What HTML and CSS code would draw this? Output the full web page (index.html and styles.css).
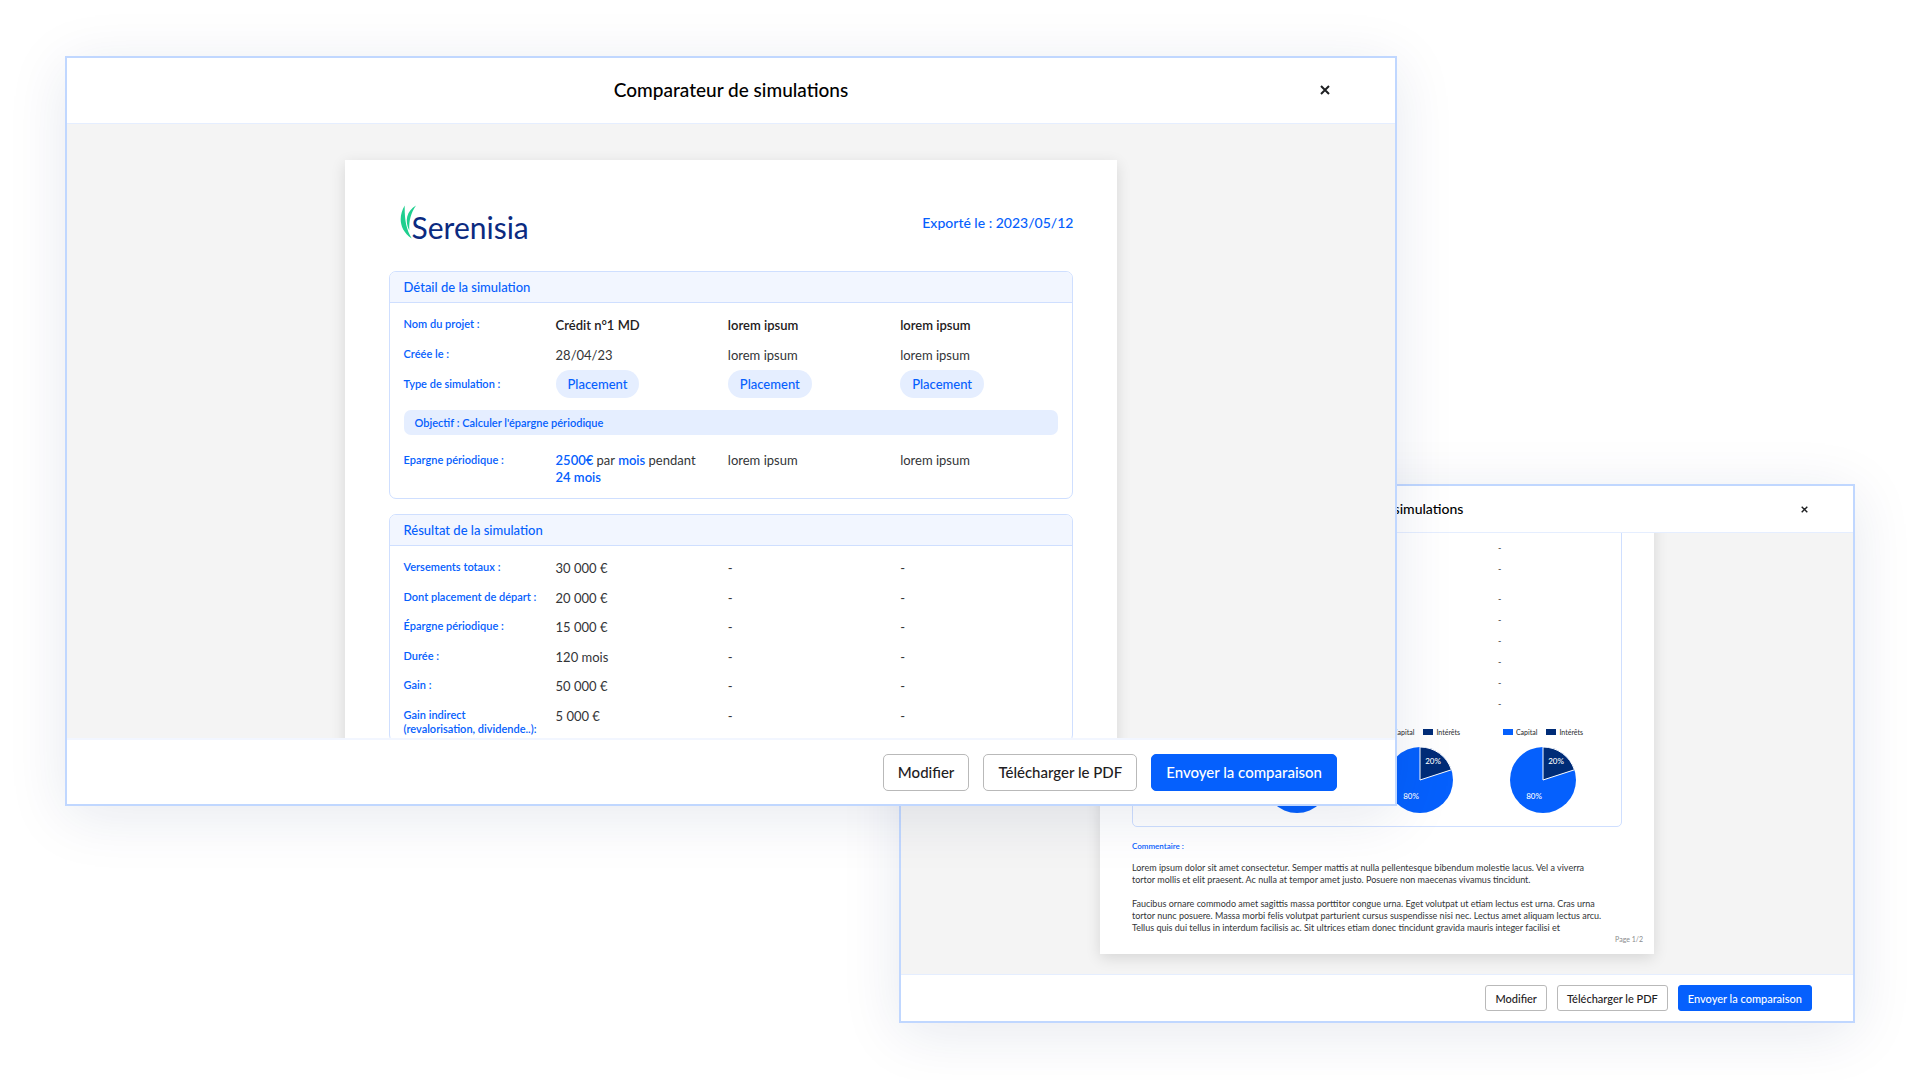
FILE: index.html
```html
<!DOCTYPE html>
<html lang="fr">
<head>
<meta charset="utf-8">
<meta name="viewport" content="width=device-width, initial-scale=1">
<title>Comparateur de simulations</title>
<link rel="stylesheet" href="styles.css">
</head>
<body>
<main class="stage">

  <section class="modal modal-back" aria-label="Comparateur de simulations, fin du document">
    <header class="modal-header">
      <h2 class="modal-title">Comparateur de simulations</h2>
      <button class="close" type="button" aria-label="Fermer">
        <svg class="close-icon" viewBox="0 0 10 10"><path d="M1 1l8 8M9 1l-8 8"/></svg>
      </button>
    </header>
    <div class="modal-body">
      <article class="page">
        <div class="page-content">
          <section class="card">
            <table class="data">
              <colgroup><col class="col-label"><col><col><col></colgroup>
              <tbody>
                <tr><th scope="row">Épargne périodique :</th><td>15 000 €</td><td>-</td><td>-</td></tr>
                <tr><th scope="row">Durée :</th><td>120 mois</td><td>-</td><td>-</td></tr>
                <tr><th scope="row">Gain :</th><td>50 000 €</td><td>-</td><td>-</td></tr>
                <tr><th scope="row">Gain indirect<br>(revalorisation, dividende..):</th><td>5 000 €</td><td>-</td><td>-</td></tr>
                <tr><th></th><td>-</td><td>-</td><td>-</td></tr>
                <tr><th></th><td>-</td><td>-</td><td>-</td></tr>
                <tr><th></th><td>-</td><td>-</td><td>-</td></tr>
                <tr><th></th><td>-</td><td>-</td><td>-</td></tr>
                <tr><th></th><td>-</td><td>-</td><td>-</td></tr>
                <tr><th></th><td>-</td><td>-</td><td>-</td></tr>
                <tr class="charts">
                  <th></th>
                  <td>
                    <figure class="chart">
                      <figcaption class="legend"><span class="key">Capital</span><span class="key key-dark">Intérêts</span></figcaption>
                      <svg class="pie" viewBox="-33 -33 66 66"><circle r="33"/><path d="M0 0V-33A33 33 0 0 1 31.4 -10.2Z"/><text x="13" y="-16">20%</text><text x="-9" y="19">80%</text></svg>
                    </figure>
                  </td>
                  <td>
                    <figure class="chart">
                      <figcaption class="legend"><span class="key">Capital</span><span class="key key-dark">Intérêts</span></figcaption>
                      <svg class="pie" viewBox="-33 -33 66 66"><circle r="33"/><path d="M0 0V-33A33 33 0 0 1 31.4 -10.2Z"/><text x="13" y="-16">20%</text><text x="-9" y="19">80%</text></svg>
                    </figure>
                  </td>
                  <td>
                    <figure class="chart">
                      <figcaption class="legend"><span class="key">Capital</span><span class="key key-dark">Intérêts</span></figcaption>
                      <svg class="pie" viewBox="-33 -33 66 66"><circle r="33"/><path d="M0 0V-33A33 33 0 0 1 31.4 -10.2Z"/><text x="13" y="-16">20%</text><text x="-9" y="19">80%</text></svg>
                    </figure>
                  </td>
                </tr>
              </tbody>
            </table>
          </section>
          <section class="comment">
            <h3 class="comment-title">Commentaire :</h3>
            <p>Lorem ipsum dolor sit amet consectetur. Semper mattis at nulla pellentesque bibendum molestie lacus. Vel a viverra<br>tortor mollis et elit praesent. Ac nulla at tempor amet justo. Posuere non maecenas vivamus tincidunt.</p>
            <p>Faucibus ornare commodo amet sagittis massa porttitor congue urna. Eget volutpat ut etiam lectus est urna. Cras urna<br>tortor nunc posuere. Massa morbi felis volutpat parturient cursus suspendisse nisi nec. Lectus amet aliquam lectus arcu.<br>Tellus quis dui tellus in interdum facilisis ac. Sit ultrices etiam donec tincidunt gravida mauris integer facilisi et</p>
          </section>
        </div>
        <footer class="page-number">Page 1/2</footer>
      </article>
    </div>
    <footer class="modal-footer">
      <button class="btn" type="button">Modifier</button>
      <button class="btn" type="button">Télécharger le PDF</button>
      <button class="btn btn-primary" type="button">Envoyer la comparaison</button>
    </footer>
  </section>

  <section class="modal modal-front" aria-label="Comparateur de simulations">
    <header class="modal-header">
      <h1 class="modal-title">Comparateur de simulations</h1>
      <button class="close" type="button" aria-label="Fermer">
        <svg class="close-icon" viewBox="0 0 10 10"><path d="M1 1l8 8M9 1l-8 8"/></svg>
      </button>
    </header>
    <div class="modal-body">
      <article class="page">
        <header class="page-header">
          <div class="brand">
            <svg class="brand-leaf" viewBox="0 0 16 34"><path d="M4.700 .5C-1.500 11 -1.500 24 11.700 33.500C6 24 4.500 14 4.700 .5Z"/><path d="M16 .5C6.500 6 4.500 16 9.300 25.500C8.800 15 11 8 16 .5Z"/></svg>
            <span class="brand-name">Serenisia</span>
          </div>
          <p class="export-date">Exporté le : 2023/05/12</p>
        </header>

        <section class="card">
          <h2 class="card-title">Détail de la simulation</h2>
          <table class="data">
            <colgroup><col class="col-label"><col><col><col></colgroup>
            <tbody>
              <tr class="strong"><th scope="row">Nom du projet :</th><td>Crédit n°1 MD</td><td>lorem ipsum</td><td>lorem ipsum</td></tr>
              <tr><th scope="row">Créée le :</th><td>28/04/23</td><td>lorem ipsum</td><td>lorem ipsum</td></tr>
              <tr class="types"><th scope="row">Type de simulation :</th><td><span class="pill">Placement</span></td><td><span class="pill">Placement</span></td><td><span class="pill">Placement</span></td></tr>
              <tr class="goal-row"><td colspan="4"><div class="goal">Objectif : Calculer l'épargne périodique</div></td></tr>
              <tr class="saving"><th scope="row">Epargne périodique :</th><td><b>2500€</b> par <b>mois</b> pendant <b>24 mois</b></td><td>lorem ipsum</td><td>lorem ipsum</td></tr>
            </tbody>
          </table>
        </section>

        <section class="card">
          <h2 class="card-title">Résultat de la simulation</h2>
          <table class="data results">
            <colgroup><col class="col-label"><col><col><col></colgroup>
            <tbody>
              <tr><th scope="row">Versements totaux :</th><td>30 000 €</td><td>-</td><td>-</td></tr>
              <tr><th scope="row">Dont placement de départ :</th><td>20 000 €</td><td>-</td><td>-</td></tr>
              <tr><th scope="row">Épargne périodique :</th><td>15 000 €</td><td>-</td><td>-</td></tr>
              <tr><th scope="row">Durée :</th><td>120 mois</td><td>-</td><td>-</td></tr>
              <tr><th scope="row">Gain :</th><td>50 000 €</td><td>-</td><td>-</td></tr>
              <tr><th scope="row">Gain indirect<br>(revalorisation, dividende..):</th><td>5 000 €</td><td>-</td><td>-</td></tr>
            </tbody>
          </table>
        </section>
      </article>
    </div>
    <footer class="modal-footer">
      <button class="btn" type="button">Modifier</button>
      <button class="btn" type="button">Télécharger le PDF</button>
      <button class="btn btn-primary" type="button">Envoyer la comparaison</button>
    </footer>
  </section>

</main>
</body>
</html>
```
FILE: styles.css
```css
:root {
  --blue: #0560fd;
  --navy: #002c77;
  --frame: #c0d7ff;
  --line: #cfdfff;
  --soft: #e5eeff;
  --tint: #f2f6ff;
  --ink: #1e2022;
  --text: #333537;
}

*,
*::before,
*::after {
  box-sizing: border-box;
}

body {
  margin: 0;
  background: #fff;
  color: var(--ink);
  font-family: Lato, "Liberation Sans", sans-serif;
}

h1, h2, h3, p, figure {
  margin: 0;
  font-weight: 500;
}

button {
  font: inherit;
  cursor: pointer;
}

/* Two overlapping windows share the middle track of the grid */
.stage {
  display: grid;
  grid-template-columns: 834fr 498fr 458fr;
  grid-template-rows: 428fr 322fr 217fr;
  height: 100vh;
  min-height: 720px;
  padding: 56px 65px 57px;
}

.modal {
  display: flex;
  flex-direction: column;
  min-width: 0;
  min-height: 0;
  border: 2px solid var(--frame);
  background: #fff;
  box-shadow: 0 10px 56px rgba(15, 40, 100, 0.1);
}

.modal-front {
  grid-area: 1 / 1 / 3 / 3;
}

.modal-back {
  grid-area: 2 / 2 / 4 / 4;
}

.modal-header {
  display: grid;
  grid-template-columns: 1fr auto 1fr;
  align-items: center;
  height: 66px;
  padding: 0 58px 1px;
  border-bottom: 1px solid var(--soft);
}

.modal-title {
  grid-column: 2;
  color: #000;
  font-size: 19px;
  line-height: 24px;
}

.close {
  justify-self: end;
  display: grid;
  place-items: center;
  width: 24px;
  height: 24px;
  padding: 0;
  border: 0;
  background: none;
}

.close-icon {
  width: 10px;
  height: 10px;
  fill: none;
  stroke: var(--ink);
  stroke-width: 2;
}

.modal-body {
  flex: 1;
  display: flex;
  flex-direction: column;
  align-items: center;
  min-height: 0;
  padding-top: 36px;
  overflow: hidden;
  background: #f4f4f4;
}

.modal-footer {
  display: flex;
  align-items: center;
  justify-content: flex-end;
  gap: 14px;
  height: 66px;
  padding: 0 58px;
  border-top: 2px solid var(--tint);
  background: #fff;
}

.btn {
  height: 37px;
  padding: 0 14px;
  border: 1px solid #b9b9b9;
  border-radius: 5px;
  background: #fff;
  color: var(--ink);
  font-size: 15px;
  font-weight: 500;
  white-space: nowrap;
}

.btn-primary {
  border-color: var(--blue);
  background: var(--blue);
  color: #fff;
}

/* Sheet */
.page {
  flex: none;
  width: 58.2%;
  padding: 44px;
  background: #fff;
  box-shadow: 0 4px 14px rgba(0, 0, 0, 0.12);
}

.page-header {
  display: flex;
  align-items: center;
  justify-content: space-between;
  height: 35px;
  margin-bottom: 32px;
}

.brand {
  display: flex;
  align-items: flex-end;
  padding-left: 11px;
}

.brand-leaf {
  width: 16px;
  height: 34px;
  margin-right: -4px;
  fill: #1fcf8f;
}

.brand-name {
  color: #0b2a80;
  font-size: 30px;
  line-height: 24px;
}

.export-date {
  padding-top: 2px;
  color: var(--blue);
  font-size: 14px;
}

.card {
  margin-bottom: 15px;
  border: 1px solid var(--line);
  border-radius: 7px;
  overflow: hidden;
}

.card-title {
  padding: 0 14px;
  border-bottom: 1px solid var(--line);
  background: var(--tint);
  color: var(--blue);
  font-size: 13px;
  line-height: 30px;
}

.data {
  width: 100%;
  padding: 7px 0 0 14px;
  border-spacing: 0;
  table-layout: fixed;
}

.col-label {
  width: 152px;
}

.data th,
.data td {
  height: 30px;
  padding: 6px 14px 6px 0;
  text-align: left;
  vertical-align: top;
}

.data th {
  padding: 7px 0 5px;
  color: var(--blue);
  font-size: 11px;
  font-weight: 600;
  line-height: 14px;
}

.data td {
  color: var(--text);
  font-size: 13px;
  line-height: 18px;
}

.data b {
  color: var(--blue);
  font-weight: 600;
  white-space: nowrap;
}

.data .strong td {
  color: var(--ink);
  font-weight: 600;
}

.results tr:nth-child(even) > * {
  height: 29px;
  padding-bottom: 5px;
}

.data .types td {
  padding: 0;
}

.pill {
  display: inline-block;
  padding: 0 12px;
  border-radius: 14px;
  background: var(--soft);
  color: var(--blue);
  font-weight: 500;
  line-height: 28px;
}

.data .goal-row td {
  padding: 10px 14px 11px 0;
}

.goal {
  padding: 0 11px;
  border-radius: 7px;
  background: var(--soft);
  color: var(--blue);
  font-size: 11px;
  font-weight: 600;
  line-height: 25px;
}

.data .saving > * {
  padding-bottom: 12px;
}

.saving td {
  line-height: 17px;
}

/* Smaller window, scrolled to the end of its sheet */
.modal-back .modal-header {
  height: 47px;
  padding: 0 41px;
}

.modal-back .modal-title {
  font-size: 14px;
}

.modal-back .close {
  width: 16px;
  height: 16px;
}

.modal-back .close-icon {
  width: 7px;
  height: 7px;
}

.modal-back .modal-body {
  justify-content: flex-end;
  padding: 0 0 20px;
}

.modal-back .modal-footer {
  gap: 10px;
  height: 47px;
  padding: 0 41px;
  border-top: 1px solid var(--soft);
}

.modal-back .btn {
  height: 26px;
  padding: 0 9px;
  border-radius: 3px;
  font-size: 11px;
}

.modal-back .page {
  padding: 0;
}

.page-content {
  padding: 0 32px;
}

.modal-back .card {
  margin-bottom: 13px;
  border-radius: 5px;
}

.modal-back .data {
  padding: 5px 0 0 10px;
}

.modal-back .col-label {
  width: 109px;
}

.modal-back .data th,
.modal-back .data td {
  height: 21px;
  padding: 4px 10px 4px 0;
  font-size: 9px;
  line-height: 13px;
}

.modal-back .data th {
  padding: 4px 0 2px;
  font-size: 8px;
  line-height: 12px;
}

.modal-back .data .charts td {
  padding: 13px 0;
}

.chart {
  display: grid;
  justify-items: center;
  gap: 10px;
  width: 90px;
}

.legend {
  display: flex;
  gap: 9px;
  font-size: 7px;
  line-height: 10px;
}

.key {
  display: flex;
  align-items: center;
  gap: 3px;
}

.key::before {
  width: 10px;
  height: 6px;
  background: var(--blue);
  content: "";
}

.key-dark::before {
  background: var(--navy);
}

.pie {
  display: block;
  width: 66px;
  height: 66px;
}

.pie circle {
  fill: var(--blue);
}

.pie path {
  fill: var(--navy);
  stroke: #fff;
}

.pie text {
  fill: #fff;
  font-size: 8px;
  text-anchor: middle;
}

.comment {
  color: var(--text);
  font-size: 9px;
  line-height: 12px;
}

.comment-title {
  margin-bottom: 10px;
  color: var(--blue);
  font-size: 8px;
  font-weight: 600;
  line-height: 12px;
}

.comment p {
  font-weight: 400;
  white-space: nowrap;
}

.comment p + p {
  margin-top: 12px;
}

.page-number {
  padding: 0 11px 10px;
  color: #8a8c8e;
  font-size: 7px;
  line-height: 10px;
  text-align: right;
}
```
